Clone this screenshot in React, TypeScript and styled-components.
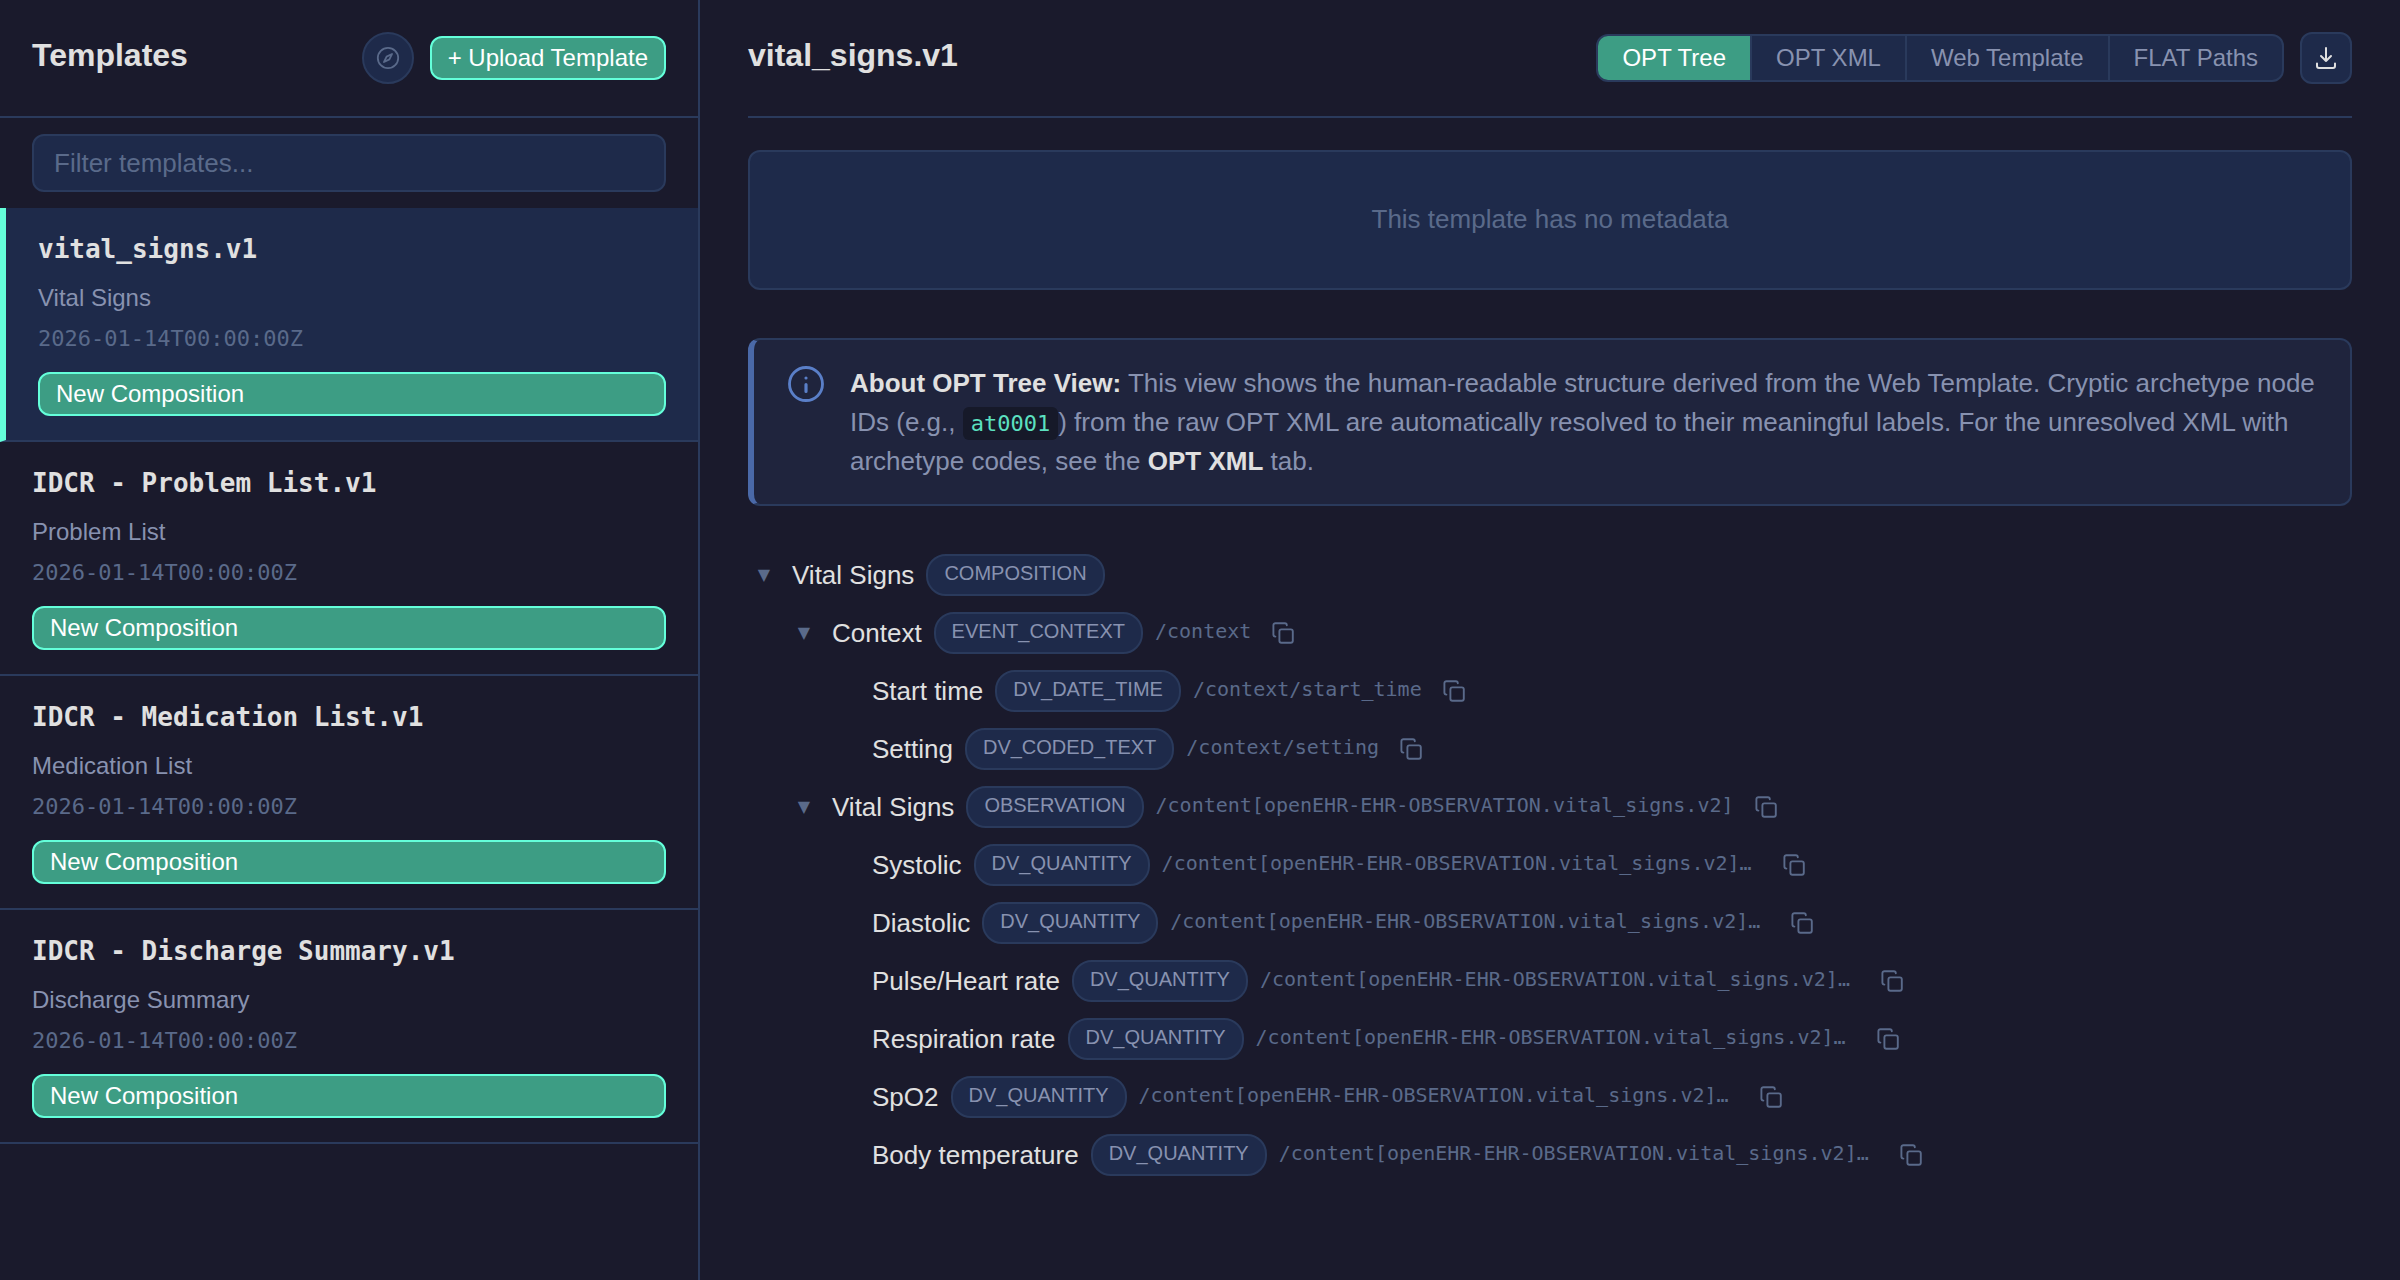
import React from "react";
import styled, { createGlobalStyle } from "styled-components";

const color = {
  page: "#1a1a2c",
  surface: "#1e2a4a",
  line: "#2a3a5c",
  text: "#e0e0e0",
  muted: "#8892b0",
  dim: "#5a6a8a",
  green: "#3d9d84",
  mint: "#64ffda",
  blue: "#4a69a8",
};

const sans = `"Liberation Sans", Arial, sans-serif`;
const mono = `"DejaVu Sans Mono", monospace`;

const GlobalStyle = createGlobalStyle`
  * { box-sizing: border-box; }
  body {
    margin: 0;
    background: ${color.page};
    color: ${color.text};
    font-family: ${sans};
    font-size: 26px;
    line-height: 39px;
  }
  h1, h2, h3, p, ul { margin: 0; padding: 0; }
  ul { list-style: none; }
  button, input { font-family: inherit; margin: 0; }
  button { cursor: pointer; }
  svg { display: block; flex: none; }
`;

const Layout = styled.div`
  display: grid;
  grid-template-columns: 700px minmax(0, 1fr);
  min-height: 100vh;
`;

const Sidebar = styled.aside`
  border-right: 2px solid ${color.line};
`;

const SidebarHeader = styled.header`
  display: flex;
  justify-content: space-between;
  align-items: flex-start;
  padding: 32px;
  border-bottom: 2px solid ${color.line};
`;

const Heading = styled.h2`
  font-size: 32px;
  line-height: 46px;
  font-weight: 700;
`;

const Actions = styled.div`
  display: flex;
  align-items: center;
  gap: 16px;
`;

const IconButton = styled.button<{ $round?: boolean }>`
  display: flex;
  align-items: center;
  justify-content: center;
  width: 52px;
  height: 52px;
  padding: 0;
  border: 2px solid ${color.line};
  border-radius: ${(p) => (p.$round ? "50%" : "12px")};
  background: ${color.surface};
  color: ${(p) => (p.$round ? color.dim : color.text)};
`;

const PrimaryButton = styled.button<{ $block?: boolean }>`
  display: block;
  width: ${(p) => (p.$block ? "100%" : "auto")};
  height: 44px;
  padding: 0 16px;
  border: 2px solid ${color.mint};
  border-radius: 12px;
  background: ${color.green};
  color: #ffffff;
  font-size: 24px;
  line-height: 36px;
  text-align: left;
`;

const FilterBar = styled.div`
  padding: 16px 32px;
`;

const FilterInput = styled.input`
  display: block;
  width: 100%;
  height: 58px;
  padding: 0 20px;
  border: 2px solid ${color.line};
  border-radius: 12px;
  background: ${color.surface};
  color: ${color.text};
  font-size: 26px;
  outline: none;
  &::placeholder { color: ${color.dim}; opacity: 1; }
`;

const TemplateItem = styled.li<{ $active?: boolean }>`
  padding: 24px 32px;
  border-bottom: 2px solid ${color.line};
  border-left: ${(p) => (p.$active ? `6px solid ${color.mint}` : "0")};
  background: ${(p) => (p.$active ? color.surface : "transparent")};
`;

const TemplateId = styled.h3`
  margin-bottom: 14px;
  font-family: ${mono};
  font-size: 26px;
  line-height: 34px;
  font-weight: 700;
`;

const TemplateName = styled.p`
  margin-bottom: 8px;
  color: ${color.muted};
  font-size: 24px;
  line-height: 36px;
`;

const TemplateDate = styled.p`
  margin-bottom: 18px;
  color: ${color.dim};
  font-family: ${mono};
  font-size: 22px;
  line-height: 30px;
`;

const Main = styled.main`
  padding: 0 48px;
`;

const MainHeader = styled.header`
  display: flex;
  justify-content: space-between;
  align-items: flex-start;
  padding: 32px 0;
  margin-bottom: 32px;
  border-bottom: 2px solid ${color.line};
`;

const Tabs = styled.div`
  display: flex;
  height: 48px;
  overflow: hidden;
  border: 2px solid ${color.line};
  border-radius: 12px;
  background: ${color.surface};
`;

const Tab = styled.button<{ $active?: boolean }>`
  padding: 0 24px;
  border: 0;
  background: ${(p) => (p.$active ? color.green : "transparent")};
  color: ${(p) => (p.$active ? "#ffffff" : color.muted)};
  font-size: 24px;
  line-height: 36px;
  & + & { border-left: 2px solid ${color.line}; }
`;

const EmptyCard = styled.section`
  margin-bottom: 48px;
  padding: 48px 48px 50px;
  border: 2px solid ${color.line};
  border-radius: 12px;
  background: ${color.surface};
  color: ${color.dim};
  line-height: 38px;
  text-align: center;
`;

const InfoBox = styled.section`
  display: flex;
  gap: 24px;
  margin-bottom: 40px;
  padding: 24px 32px 23px;
  border: 2px solid ${color.line};
  border-left: 6px solid ${color.blue};
  border-radius: 12px;
  background: #1f243d;
  color: ${color.muted};
  strong { color: ${color.text}; }
`;

const InlineCode = styled.code`
  padding: 4px 8px;
  border-radius: 6px;
  background: #161929;
  color: #5ce0c0;
  font-family: ${mono};
  font-size: 22px;
  line-height: 22px;
`;

const TreeRow = styled.li<{ $level: number }>`
  display: flex;
  align-items: center;
  gap: 12px;
  height: 58px;
  padding-left: ${(p) => 8 + p.$level * 40}px;
`;

const Chevron = styled.span`
  width: 16px;
  margin-right: 8px;
  color: ${color.dim};
  font-family: "DejaVu Sans", sans-serif;
  font-size: 16px;
  line-height: 24px;
  text-align: center;
`;

const NodeName = styled.span`
  color: ${color.text};
`;

const TypeBadge = styled.span`
  padding: 2px 16px 6px;
  border: 2px solid ${color.line};
  border-radius: 20px;
  background: ${color.surface};
  color: ${color.muted};
  font-size: 20px;
  line-height: 30px;
`;

const NodePath = styled.span<{ $clipped: boolean }>`
  width: ${(p) => (p.$clipped ? "600px" : "auto")};
  padding-bottom: 4px;
  color: ${color.dim};
  font-family: ${mono};
  font-size: 20px;
  line-height: 30px;
`;

const CopyButton = styled.button`
  padding: 8px;
  border: 0;
  background: transparent;
  color: ${color.dim};
`;

const Icon = ({ weight, children }: { weight: number; children: React.ReactNode }) => (
  <svg width="24" height="24" viewBox="0 0 24 24" fill="none" stroke="currentColor"
    strokeWidth={weight} strokeLinecap="round" strokeLinejoin="round" aria-hidden="true">
    {children}
  </svg>
);

const templates = [
  { id: "vital_signs.v1", name: "Vital Signs" },
  { id: "IDCR - Problem List.v1", name: "Problem List" },
  { id: "IDCR - Medication List.v1", name: "Medication List" },
  { id: "IDCR - Discharge Summary.v1", name: "Discharge Summary" },
];

const views = ["OPT Tree", "OPT XML", "Web Template", "FLAT Paths"];

const observation = "/content[openEHR-EHR-OBSERVATION.vital_signs.v2]";

type TreeNode = { name: string; type: string; level: number; path?: string; open?: boolean };

const nodes: TreeNode[] = [
  { name: "Vital Signs", type: "COMPOSITION", level: 0, open: true },
  { name: "Context", type: "EVENT_CONTEXT", level: 1, path: "/context", open: true },
  { name: "Start time", type: "DV_DATE_TIME", level: 2, path: "/context/start_time" },
  { name: "Setting", type: "DV_CODED_TEXT", level: 2, path: "/context/setting" },
  { name: "Vital Signs", type: "OBSERVATION", level: 1, path: observation, open: true },
  ...["Systolic", "Diastolic", "Pulse/Heart rate", "Respiration rate", "SpO2", "Body temperature"].map(
    (name) => ({ name, type: "DV_QUANTITY", level: 2, path: observation + "…" }),
  ),
];

export default function App() {
  return (
    <Layout>
      <GlobalStyle />
      <Sidebar>
        <SidebarHeader>
          <Heading>Templates</Heading>
          <Actions>
            <IconButton $round aria-label="Explore">
              <Icon weight={1.8}>
                <circle cx="12" cy="12" r="10.2" />
                <path d="M16 8l-2.6 5.4L8 16l2.6-5.4z" />
              </Icon>
            </IconButton>
            <PrimaryButton>+ Upload Template</PrimaryButton>
          </Actions>
        </SidebarHeader>
        <FilterBar>
          <FilterInput type="text" placeholder="Filter templates..." aria-label="Filter templates" />
        </FilterBar>
        <ul>
          {templates.map((t, i) => (
            <TemplateItem key={t.id} $active={i === 0}>
              <TemplateId>{t.id}</TemplateId>
              <TemplateName>{t.name}</TemplateName>
              <TemplateDate>2026-01-14T00:00:00Z</TemplateDate>
              <PrimaryButton $block>New Composition</PrimaryButton>
            </TemplateItem>
          ))}
        </ul>
      </Sidebar>
      <Main>
        <MainHeader>
          <Heading>vital_signs.v1</Heading>
          <Actions>
            <Tabs>
              {views.map((v, i) => (
                <Tab key={v} $active={i === 0}>{v}</Tab>
              ))}
            </Tabs>
            <IconButton aria-label="Download">
              <Icon weight={2}>
                <path d="M3 17.5V20a2 2 0 0 0 2 2h14a2 2 0 0 0 2-2v-2.5" />
                <path d="M7 10l5 5 5-5M12 15V2" />
              </Icon>
            </IconButton>
          </Actions>
        </MainHeader>
        <EmptyCard>This template has no metadata</EmptyCard>
        <InfoBox>
          <svg width="40" height="40" viewBox="0 0 24 24" fill="none" stroke="#5a7fc8"
            strokeLinecap="round" aria-hidden="true">
            <circle cx="12" cy="12" r="9.9" strokeWidth="1.7" />
            <path d="M12 16.5V12.3M12 8.4h.01" strokeWidth="1.9" />
          </svg>
          <p>
            <strong>About OPT Tree View:</strong> This view shows the human-readable structure derived
            from the Web Template. Cryptic archetype node IDs (e.g., <InlineCode>at0001</InlineCode>) from
            the raw OPT XML are automatically resolved to their meaningful labels. For the unresolved XML
            with archetype codes, see the <strong>OPT XML</strong> tab.
          </p>
        </InfoBox>
        <ul>
          {nodes.map((n, i) => (
            <TreeRow key={i} $level={n.level}>
              <Chevron>{n.open ? "▼" : ""}</Chevron>
              <NodeName>{n.name}</NodeName>
              <TypeBadge>{n.type}</TypeBadge>
              {n.path && (
                <>
                  <NodePath $clipped={n.path.endsWith("…")}>{n.path}</NodePath>
                  <CopyButton aria-label="Copy path">
                    <Icon weight={1.9}>
                      <rect x="8.4" y="8.4" width="13.4" height="13.4" rx="2" />
                      <path d="M4.4 15.6a2 2 0 0 1-2-2V4.2a2 2 0 0 1 2-2h9.4a2 2 0 0 1 2 2" />
                    </Icon>
                  </CopyButton>
                </>
              )}
            </TreeRow>
          ))}
        </ul>
      </Main>
    </Layout>
  );
}
